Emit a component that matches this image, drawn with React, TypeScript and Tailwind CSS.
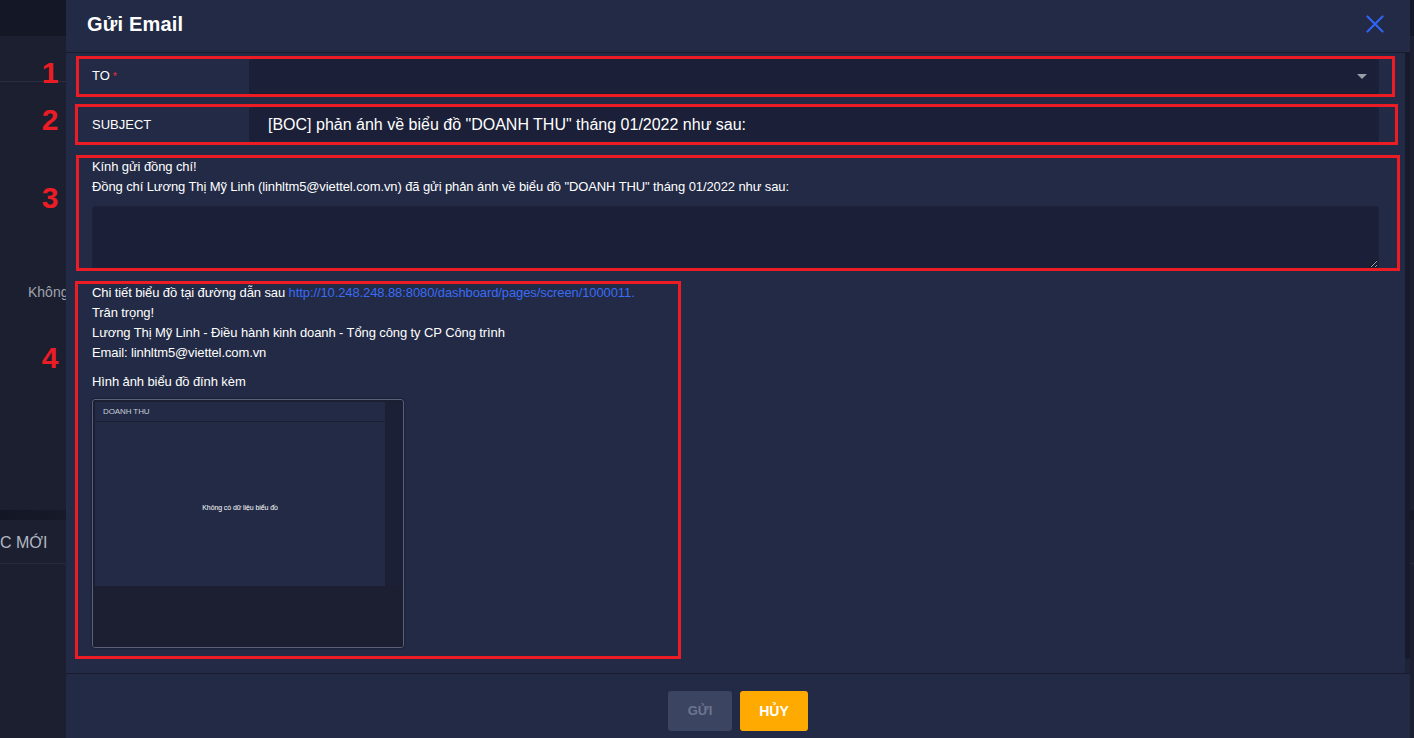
const FONT = "font-['Liberation_Sans',Arial,sans-serif]"

// red annotation frames laid over the screenshot
const MARKS = [
  { n: "1", box: "left-[76px] top-[56px] w-[1319px] h-[41px]", num: "top-[58px]" },
  { n: "2", box: "left-[75px] top-[104px] w-[1323px] h-[41px]", num: "top-[105px]" },
  { n: "3", box: "left-[76px] top-[155px] w-[1324px] h-[116px]", num: "top-[183px]" },
  { n: "4", box: "left-[75px] top-[281px] w-[606px] h-[378px]", num: "top-[343px]" },
]

function ChartThumb() {
  return (
    <div className="w-[312px] h-[249px] rounded-[3px] border border-[#5a6078] shadow-[0_0_2px_rgba(0,0,0,0.6)] bg-[#1b1f31] flex flex-col overflow-hidden">
      <div className="flex flex-1">
        <div className="flex-1 flex flex-col bg-[#222a45] ml-[2px] mt-[2px]">
          <div className="h-[20px] border-b border-[#1a1e33] flex items-center pl-[8px] text-[8px] text-[#c8ccd6]">DOANH THU</div>
          <div className="flex-1 flex items-center justify-center text-[7px] text-white pt-[8px]">Không có dữ liệu biểu đồ</div>
        </div>
        <div className="w-[18px] bg-[#1c2036] mt-[2px]" />
      </div>
      <div className="h-[61px] bg-[#1b1f31]" />
    </div>
  )
}

export default function App() {
  return (
    <div className={`relative w-[1414px] h-[738px] overflow-hidden flex bg-[#1b1f30] ${FONT}`}>
      {/* page behind the modal */}
      <div className="w-[66px] flex flex-col">
        <div className="h-[36px] bg-[#141725]" />
        <div className="h-[46px] border-b border-[#2a2f3f]" />
        <div className="h-[200px]" />
        <div className="pl-[28px] text-[14px] text-[#9ea3ad] whitespace-nowrap leading-[20px]">Không</div>
        <div className="h-[208px]" />
        <div className="h-[10px] bg-gradient-to-r from-[#131624] to-[#171a29]" />
        <div className="h-[44px] flex items-center pt-[3px] text-[16px] text-[#b3b8c2] whitespace-nowrap border-b border-[#262b3b]">C MỚI</div>
      </div>

      {/* modal */}
      <div className="w-[1344px] flex flex-col bg-[#222a45] text-white">
        <div className="h-[53px] flex items-center justify-between pl-[21px] pr-[26px] pb-[4px] border-b border-[#181c2f]">
          <h1 className="text-[20px] font-bold tracking-[0.2px]">Gửi Email</h1>
          <svg width="18" height="18" viewBox="0 0 18 18" className="text-[#3064f2]">
            <path d="M1.5 1.5 L16.5 16.5 M16.5 1.5 L1.5 16.5" stroke="currentColor" strokeWidth="2.2" strokeLinecap="round" />
          </svg>
        </div>

        <div className="flex-1 flex min-h-0">
          <div className="flex-1 pl-[14px] pr-[26px] pt-[6px] flex flex-col">
            <div className="flex h-[34px]">
              <div className="w-[169px] flex items-center pl-[12px] text-[13px]">
                TO<span className="text-[#e0313a] ml-[3px] text-[11px]">*</span>
              </div>
              <div className="flex-1 rounded-[3px] bg-[#1b1f38] shadow-[0_1px_0_#181b2c] flex items-center justify-end pr-[12px]">
                <div className="w-0 h-0 border-l-[5px] border-r-[5px] border-t-[5px] border-l-transparent border-r-transparent border-t-[#9a9ca6]" />
              </div>
            </div>

            <div className="flex h-[35px] mt-[14px]">
              <div className="w-[169px] flex items-center pl-[12px] text-[13px]">SUBJECT</div>
              <div className="flex-1 rounded-[3px] bg-[#1b1f38] flex items-center pl-[19px] text-[16px]">
                [BOC] phản ánh về biểu đồ "DOANH THU" tháng 01/2022 như sau:
              </div>
            </div>

            <div className="pl-[12px] pt-[15px] text-[13px] leading-[20px] tracking-[-0.1px]">
              <p>Kính gửi đồng chí!</p>
              <p>Đồng chí Lương Thị Mỹ Linh (linhltm5@viettel.com.vn) đã gửi phản ánh về biểu đồ "DOANH THU" tháng 01/2022 như sau:</p>
              <textarea className="block mt-[9px] w-full h-[63px] rounded-[3px] bg-[#1b1f38] border border-[#1e2238] outline-none" />
            </div>

            <div className="pl-[12px] pt-[14px] text-[13px] leading-[20px] tracking-[-0.1px]">
              <p>
                Chi tiết biểu đồ tại đường dẫn sau{" "}
                <a className="text-[#3a6cf4]">http://10.248.248.88:8080/dashboard/pages/screen/1000011.</a>
              </p>
              <p>Trân trọng!</p>
              <p>Lương Thị Mỹ Linh - Điều hành kinh doanh - Tổng công ty CP Công trình</p>
              <p>Email: linhltm5@viettel.com.vn</p>
              <p className="mt-[9px]">Hình ảnh biểu đồ đính kèm</p>
              <div className="mt-[7px]">
                <ChartThumb />
              </div>
            </div>
          </div>
          {/* scrollbar */}
          <div className="w-[5px] bg-[#1d2338]">
            <div className="h-[606px] rounded-b-[3px] bg-[#161a2c]" />
          </div>
        </div>

        <div className="h-[65px] border-t border-[#171b2d] flex items-start justify-center gap-[8px] pt-[17px]">
          <button className="w-[64px] h-[40px] rounded-[3px] bg-[#3b4460] text-[#6c7691] text-[13px] font-bold">GỬI</button>
          <button className="w-[68px] h-[40px] rounded-[3px] bg-[#ffaa00] text-white text-[14px] font-bold">HỦY</button>
        </div>
      </div>

      <div className="flex-1 flex flex-col">
        <div className="h-[36px] bg-[#141725]" />
        <div className="h-[474px]" />
        <div className="h-[10px] bg-[#151827]" />
        <div className="h-[44px] border-b border-[#262b3b]" />
      </div>

      {MARKS.map((m) => (
        <div key={m.n}>
          <div className={`absolute border-[3px] border-[#ec1c24] ${m.box}`} />
          <div className={`absolute left-[40px] w-[20px] text-center text-[30px] font-bold leading-[30px] text-[#ec1c24] ${m.num}`}>{m.n}</div>
        </div>
      ))}
    </div>
  )
}
